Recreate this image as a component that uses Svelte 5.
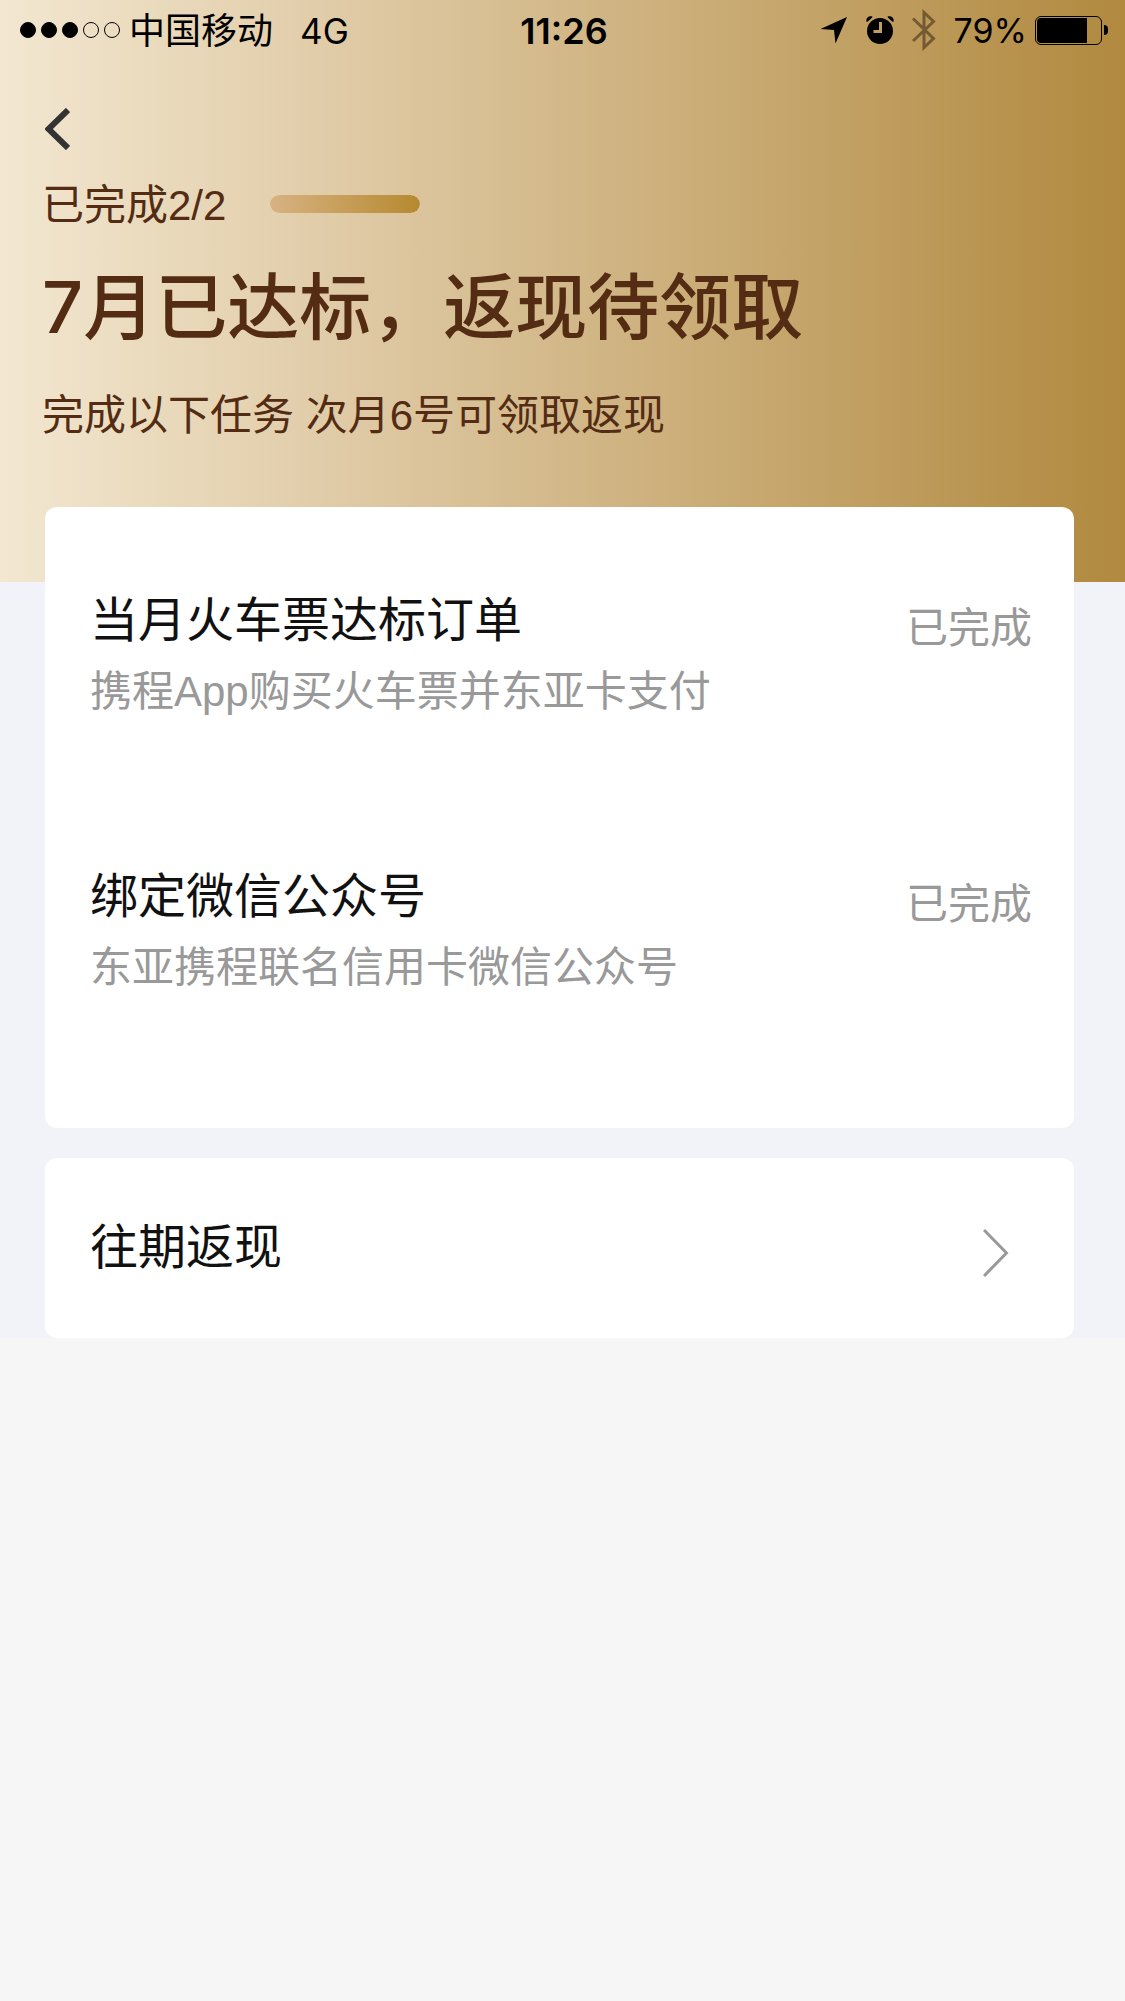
<script>
  const signal = [true, true, true, false, false];
  const battery = 79;

  const done = 2;
  const total = 2;

  const tasks = [
    { title: '当月火车票达标订单', desc: '携程App购买火车票并东亚卡支付', status: '已完成' },
    { title: '绑定微信公众号', desc: '东亚携程联名信用卡微信公众号', status: '已完成' },
  ];
</script>

<div class="page" lang="zh-CN">
  <header class="hero">
    <div class="status-bar">
      <div class="status-left">
        <span class="dots">
          {#each signal as on}
            <i class="dot" class:on></i>
          {/each}
        </span>
        <span class="carrier">中国移动</span>
        <span class="network">4G</span>
      </div>
      <time class="clock">11:26</time>
      <div class="status-right">
        <svg class="location" width="28" height="28" viewBox="0 0 28 28" aria-hidden="true">
          <path d="M27 1 L0.5 13 L14 14 L15.5 27.5 Z" />
        </svg>
        <svg class="alarm" width="28" height="28" viewBox="0 0 28 28" aria-hidden="true">
          <circle cx="14" cy="15" r="13" />
          <path d="M0.8 6 C-1 3 2.5 -1.2 6.4 0.6 L6.2 1.6 L1.8 5.6 Z M27.2 6 C29 3 25.5 -1.2 21.6 0.6 L21.8 1.6 L26.2 5.6 Z" />
          <path class="hands" d="M14.5 6 V15.5 H7.5" />
        </svg>
        <svg class="bluetooth" width="24" height="42" viewBox="0 0 24 42" aria-hidden="true">
          <path d="M1 9.5 L21.5 29.5 L12 38.5 V3.5 L21.5 12.5 L1 32" />
        </svg>
        <span class="percent">{battery}%</span>
        <span class="battery">
          <span class="cell"><span class="charge" style="width: {battery}%"></span></span>
          <span class="nub"></span>
        </span>
      </div>
    </div>

    <nav>
      <button class="back" aria-label="返回">
        <svg width="25" height="42" viewBox="0 0 25 42" aria-hidden="true">
          <path d="M23 2 L3.5 21 L23 40" />
        </svg>
      </button>
    </nav>

    <div class="summary">
      <div class="progress-row">
        <span>已完成{done}/{total}</span>
        <div class="track" role="progressbar" aria-label="已完成" aria-valuenow={done} aria-valuemin="0" aria-valuemax={total}>
          <div class="fill" style="width: {(done / total) * 100}%"></div>
        </div>
      </div>
      <h1>7月已达标，返现待领取</h1>
      <p>完成以下任务 次月6号可领取返现</p>
    </div>
  </header>

  <main>
    <ul class="card tasks">
      {#each tasks as task}
        <li>
          <div>
            <h2>{task.title}</h2>
            <p>{task.desc}</p>
          </div>
          <span class="state">{task.status}</span>
        </li>
      {/each}
    </ul>

    <a class="card history" href="#history">
      <span>往期返现</span>
      <svg width="26" height="48" viewBox="0 0 26 48" aria-hidden="true">
        <path d="M1 1 L23.5 24 L1 47" />
      </svg>
    </a>
  </main>
</div>

<style>
  :global(body) {
    background: #f6f6f6;
  }
  .page {
    font-family: "Liberation Sans", "Noto Sans CJK SC", sans-serif;
    color: #111;
  }
  h1, h2, p, ul { margin: 0; padding: 0; font-weight: 400; }
  svg { display: block; flex-shrink: 0; }

  .hero {
    box-sizing: border-box;
    padding-bottom: 136px;
    background: linear-gradient(to right, #f3e7d2, #ebdcbf 12%, #e0cba7 30%, #b1893f);
    color: #532c13;
  }

  /* status bar */
  .status-bar {
    display: grid;
    grid-template-columns: 1fr auto 1fr;
    align-items: center;
    height: 60px;
    padding: 0 17px 0 20px;
    font-family: Inter, "Noto Sans CJK SC", sans-serif;
    font-size: 35px;
    line-height: 56px;
    color: #000;
  }
  .status-left, .status-right, .dots, .battery { display: flex; align-items: center; }
  .status-right { justify-content: flex-end; }
  .dots { gap: 5px; }
  .dot {
    box-sizing: border-box;
    width: 16px;
    height: 16px;
    border: 1px solid #000;
    border-radius: 50%;
  }
  .dot.on { background: #000; }
  .carrier, .network, .clock, .percent { padding-top: 2px; }
  .carrier { margin-left: 9px; font-size: 36px; }
  .network { margin-left: 27px; }
  .clock { font-size: 36px; font-weight: 600; }
  .alarm { margin-left: 18px; }
  .alarm .hands { fill: none; stroke: #c09f5f; stroke-width: 3; }
  .bluetooth { margin-left: 18px; }
  .bluetooth path { fill: none; stroke: #745a31; stroke-width: 3; }
  .percent { margin-left: 18px; font-size: 34px; }
  .battery { margin-left: 8px; gap: 2px; }
  .cell {
    box-sizing: border-box;
    width: 67px;
    height: 29px;
    padding: 1px;
    border: 1px solid #000;
    border-radius: 6px;
  }
  .charge {
    display: block;
    height: 25px;
    border-radius: 4px 0 0 4px;
    background: #000;
  }
  .nub {
    width: 4px;
    height: 10px;
    border-radius: 0 5px 5px 0;
    background: #000;
  }

  nav { padding: 48px 45px 26px; }
  .back {
    display: block;
    padding: 0;
    border: 0;
    background: none;
    cursor: pointer;
  }
  .back path { fill: none; stroke: #333; stroke-width: 6; }

  .summary { padding: 0 42px; font-size: 42px; line-height: 60px; }
  .progress-row { display: flex; align-items: flex-start; gap: 44px; }
  .track {
    width: 150px;
    height: 18px;
    margin-top: 19px;
    border-radius: 9px;
    overflow: hidden;
  }
  .fill {
    height: 100%;
    border-radius: 9px;
    background: linear-gradient(to right, #d8b283, #b6892f);
  }
  h1 {
    margin: 20px 0 28px;
    font-family: Inter, "Noto Sans CJK SC", sans-serif;
    font-size: 72px;
    font-weight: 500;
    line-height: 102px;
  }

  /* cards */
  main {
    display: flex;
    flex-direction: column;
    gap: 30px;
    padding: 0 51px 0 45px;
    background: #f2f3f8;
  }
  .card {
    border-radius: 12px;
    background: #fff;
  }
  .tasks {
    display: flex;
    flex-direction: column;
    gap: 142px;
    margin-top: -75px;
    padding: 81px 42px 130px 45px;
    list-style: none;
  }
  li { display: flex; justify-content: space-between; }
  h2 {
    margin-bottom: 8px;
    font-size: 48px;
    line-height: 66px;
  }
  li p {
    font-size: 42px;
    line-height: 60px;
    color: #999;
  }
  .state {
    flex-shrink: 0;
    font-size: 42px;
    line-height: 82px;
    color: #999;
  }
  .history {
    display: flex;
    align-items: center;
    justify-content: space-between;
    padding: 48px 65px 48px 45px;
    font-size: 48px;
    line-height: 84px;
    color: #111;
    text-decoration: none;
  }
  .history svg { margin-top: 10px; }
  .history path { fill: none; stroke: #999; stroke-width: 3; }
</style>
